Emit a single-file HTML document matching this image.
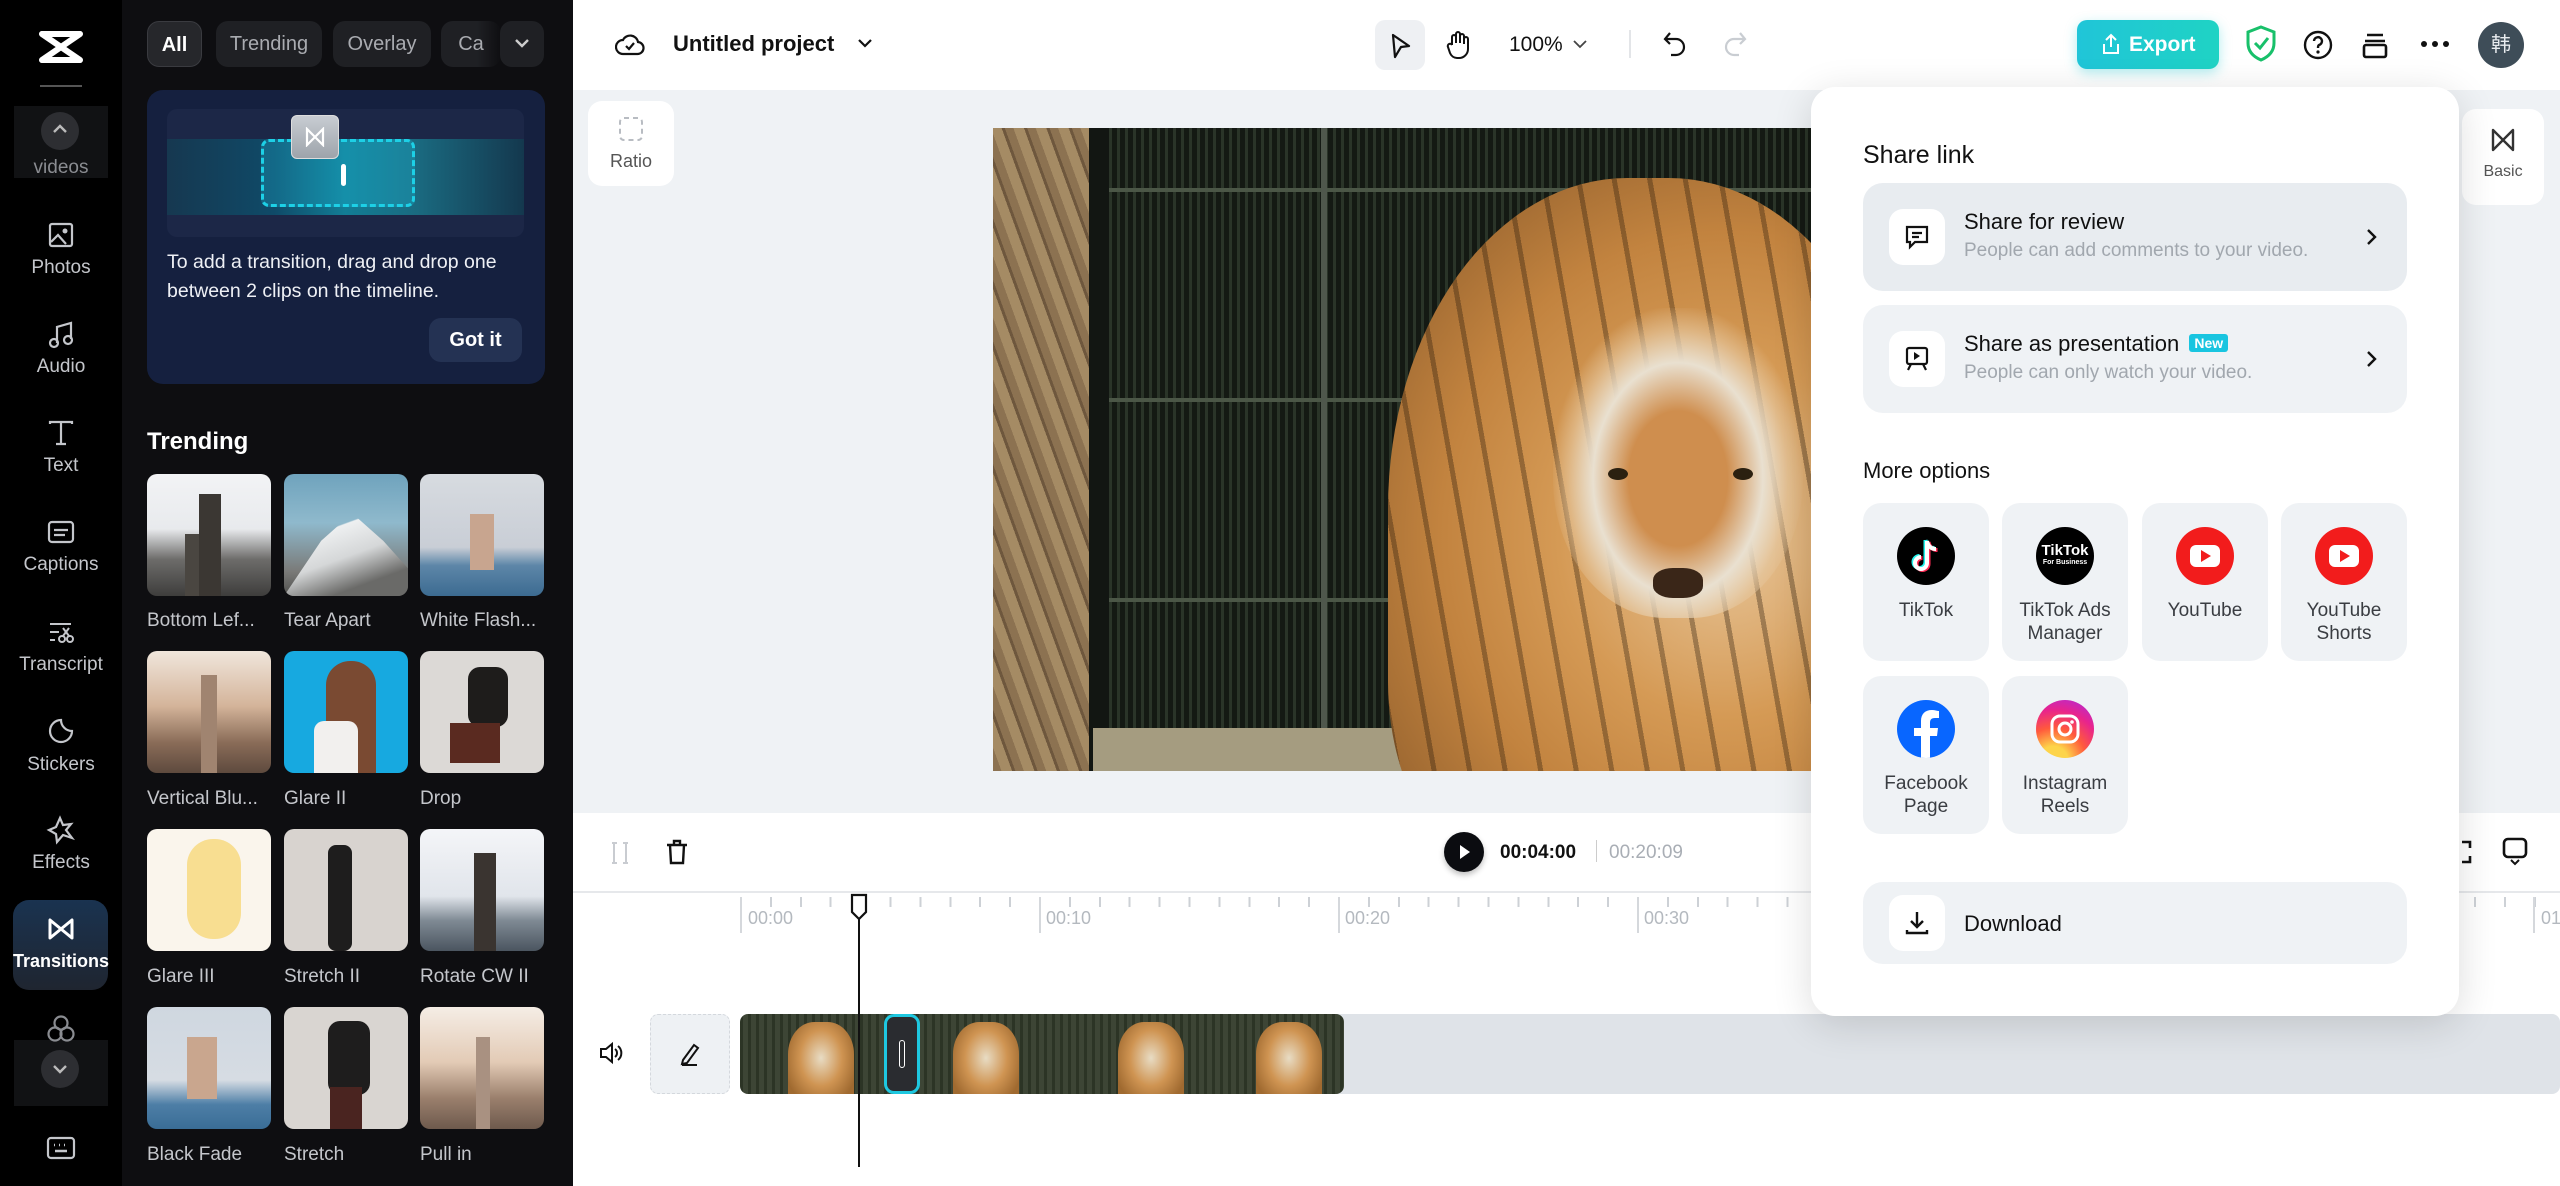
<!DOCTYPE html>
<html><head><meta charset="utf-8">
<style>
*{box-sizing:border-box;margin:0;padding:0}
body{width:2560px;height:1186px;overflow:hidden;position:relative;background:#fff;font-family:"Liberation Sans","Noto Sans CJK SC",sans-serif}
.a{position:absolute}
.nav{left:0;top:0;width:122px;height:1186px;background:#000}
.ni{position:absolute;left:0;width:122px;text-align:center;color:#c4c6cb;font-size:19px}
.ni svg{display:block;margin:0 auto}
.panel{left:122px;top:0;width:451px;height:1186px;background:#0e0e11}
.tab{position:absolute;top:21px;height:46px;border-radius:12px;background:#1f2024;color:#a9abb0;font-size:20px;line-height:46px;text-align:center}
.th{position:absolute;width:124px;height:122px;border-radius:10px;overflow:hidden}
.tl{position:absolute;color:#c4c6cb;font-size:19px;white-space:nowrap}
.pop{left:1811px;top:87px;width:648px;height:929px;background:#fff;border-radius:24px;box-shadow:0 8px 40px rgba(0,0,0,.14)}
.card{position:absolute;left:52px;width:544px;border-radius:20px;background:#eff2f5}
.ib{position:absolute;left:26px;width:56px;height:56px;background:#fff;border-radius:14px}
.ib svg{position:absolute;left:14px;top:14px}
.tile{position:absolute;width:126px;height:158px;border-radius:18px;background:#eff2f5;text-align:center;color:#3a3d42;font-size:19px;line-height:23px}
.tile .c{width:58px;height:58px;border-radius:50%;margin:24px auto 14px;position:relative;overflow:hidden}
.tk{position:absolute;top:562px;color:#b4b9bf;font-size:18px}
</style></head><body>

<!-- NAV -->
<div class="a nav">
  <svg class="a" style="left:38px;top:30px" width="46" height="34" viewBox="0 0 46 34"><path d="M4 4 L42 4 M4 30 L42 30 M4 4 L23 17 L42 4 M4 30 L23 17 L42 30" stroke="#fff" stroke-width="6" fill="none" stroke-linecap="round"/></svg>
  <div class="a" style="left:40px;top:85px;width:42px;height:2px;background:#555"></div>
  <div class="a" style="left:14px;top:106px;width:94px;height:72px;background:#111214"></div>
  <div class="a" style="left:41px;top:112px;width:38px;height:38px;border-radius:50%;background:#2d2e32"></div>
  <svg class="a" style="left:51px;top:122px" width="18" height="14"><path d="M3 10 L9 4 L15 10" stroke="#bbb" stroke-width="2.4" fill="none"/></svg>
  <div class="ni" style="top:157px;color:#8a8c91">videos</div>
  <div class="ni" style="top:222px"><svg width="26" height="26"><rect x="2" y="2" width="22" height="22" rx="2" fill="none" stroke="#c4c6cb" stroke-width="2.2"/><circle cx="17" cy="9" r="2.5" fill="#c4c6cb"/><path d="M3 20 L10 13 L18 22" stroke="#c4c6cb" stroke-width="2.2" fill="none"/></svg><div style="margin-top:9px">Photos</div></div>
  <div class="ni" style="top:321px"><svg width="26" height="28"><path d="M9 22 V6 L23 2 V18" stroke="#c4c6cb" stroke-width="2.2" fill="none"/><circle cx="6" cy="22" r="4" fill="none" stroke="#c4c6cb" stroke-width="2.2"/><circle cx="20" cy="19" r="4" fill="none" stroke="#c4c6cb" stroke-width="2.2"/></svg><div style="margin-top:7px">Audio</div></div>
  <div class="ni" style="top:420px"><svg width="26" height="26"><path d="M2 4 V2 H24 V4 M13 2 V24 M8 24 H18" stroke="#c4c6cb" stroke-width="2.2" fill="none"/></svg><div style="margin-top:9px">Text</div></div>
  <div class="ni" style="top:520px"><svg width="28" height="24"><rect x="2" y="2" width="24" height="20" rx="3" fill="none" stroke="#c4c6cb" stroke-width="2.2"/><path d="M7 10 H21 M7 15 H18" stroke="#c4c6cb" stroke-width="2.2"/></svg><div style="margin-top:10px">Captions</div></div>
  <div class="ni" style="top:620px"><svg width="28" height="24"><path d="M3 4 H24 M3 12 H12 M3 20 H8" stroke="#c4c6cb" stroke-width="2"/><circle cx="15" cy="19" r="3" fill="none" stroke="#c4c6cb" stroke-width="2"/><circle cx="23" cy="19" r="3" fill="none" stroke="#c4c6cb" stroke-width="2"/><path d="M16 16 L22 8 M22 16 L16 8" stroke="#c4c6cb" stroke-width="2"/></svg><div style="margin-top:10px">Transcript</div></div>
  <div class="ni" style="top:717px"><svg width="28" height="28"><path d="M25 14 A11 11 0 1 1 14 3 A11 11 0 0 0 25 14 Z" fill="none" stroke="#c4c6cb" stroke-width="2.2"/></svg><div style="margin-top:9px">Stickers</div></div>
  <div class="ni" style="top:815px"><svg width="30" height="30"><path d="M14 3 L17 10 L25 9 L20 15 L26 23 L17 20 L11 27 L10 19 L3 15 L10 12 Z" fill="none" stroke="#c4c6cb" stroke-width="2.2"/></svg><div style="margin-top:7px">Effects</div></div>
  <div class="a" style="left:13px;top:900px;width:95px;height:90px;border-radius:16px;background:linear-gradient(180deg,#1a3350,#1f2530)"></div>
  <div class="ni" style="top:917px;color:#fff;font-weight:bold;font-size:18px"><svg width="28" height="24"><path d="M3 3 V21 L25 3 V21 Z" fill="none" stroke="#fff" stroke-width="3" stroke-linejoin="round"/></svg><div style="margin-top:10px">Transitions</div></div>
  <div class="a" style="left:14px;top:1040px;width:94px;height:66px;background:#111214"></div>
  <svg class="a" style="left:46px;top:1014px" width="30" height="30"><circle cx="15" cy="9" r="6.5" fill="none" stroke="#8a8c91" stroke-width="2.2"/><circle cx="9" cy="20" r="6.5" fill="none" stroke="#8a8c91" stroke-width="2.2"/><circle cx="21" cy="20" r="6.5" fill="none" stroke="#8a8c91" stroke-width="2.2"/></svg>
  <div class="a" style="left:41px;top:1050px;width:38px;height:38px;border-radius:50%;background:#2d2e32"></div>
  <svg class="a" style="left:51px;top:1062px" width="18" height="14"><path d="M3 4 L9 10 L15 4" stroke="#bbb" stroke-width="2.4" fill="none"/></svg>
  <svg class="a" style="left:46px;top:1136px" width="30" height="24"><rect x="2" y="2" width="26" height="20" rx="3" fill="none" stroke="#c4c6cb" stroke-width="2.2"/><path d="M8 9 h1 M13 9 h1 M18 9 h1 M23 9 h0 M9 15 H21" stroke="#c4c6cb" stroke-width="2.4"/></svg>
</div>

<!-- PANEL -->
<div class="a panel">
  <div class="tab" style="left:25px;width:55px;background:#26272b;border:1.5px solid #3a3b40;color:#fff;font-weight:bold">All</div>
  <div class="tab" style="left:94px;width:106px">Trending</div>
  <div class="tab" style="left:211px;width:98px">Overlay</div>
  <div class="tab" style="left:319px;width:60px;background:linear-gradient(90deg,#1f2024 60%,#0e0e11)">Ca</div>
  <div class="tab" style="left:378px;width:44px"><svg width="20" height="46"><path d="M4 19 L10 25 L16 19" stroke="#ccc" stroke-width="2.4" fill="none"/></svg></div>

  <div class="a" style="left:25px;top:90px;width:398px;height:294px;border-radius:16px;background:#15203f">
    <div class="a" style="left:20px;top:19px;width:357px;height:128px;border-radius:10px;background:#1c2747;overflow:hidden">
      <div class="a" style="left:0;top:30px;width:357px;height:76px;background:linear-gradient(90deg,#163850,#0f4a68 30%,#127d95 50%,#1a6a80 70%,#14384e)"></div>
      <div class="a" style="left:94px;top:30px;width:154px;height:68px;border:3px dashed #1dd0e6;border-radius:8px;background:rgba(30,200,230,.25)"></div>
      <div class="a" style="left:124px;top:6px;width:48px;height:44px;border-radius:6px;background:linear-gradient(#c8ccd2,#9ea4ab);border:1px solid #ddd"></div>
      <svg class="a" style="left:138px;top:18px" width="20" height="20"><path d="M2 2 V18 L18 2 V18 Z" fill="none" stroke="#fff" stroke-width="2.2"/></svg>
      <div class="a" style="left:174px;top:55px;width:5px;height:22px;border-radius:3px;background:#fff"></div>
    </div>
    <div class="a" style="left:20px;top:158px;width:370px;color:#eef0f5;font-size:19.5px;line-height:29px">To add a transition, drag and drop one between 2 clips on the timeline.</div>
    <div class="a" style="left:282px;top:228px;width:93px;height:44px;border-radius:12px;background:#243253;color:#fff;font-weight:bold;font-size:20px;line-height:44px;text-align:center">Got it</div>
  </div>
  <div class="a" style="left:25px;top:428px;color:#fff;font-weight:bold;font-size:24px">Trending</div>

  <div class="th" style="left:25px;top:474px;background:linear-gradient(180deg,#f2f3f5 0%,#e8eaed 45%,#6d6c6a 70%,#3e3d3c)"><div class="a" style="left:52px;top:20px;width:22px;height:102px;background:#3b3733"></div><div class="a" style="left:38px;top:60px;width:14px;height:62px;background:#4a4641"></div></div>
  <div class="th" style="left:162px;top:474px;background:linear-gradient(180deg,#6fa3bd,#8fb9cc 40%,#7a7a78 80%,#50504e)"><div class="a" style="left:0;top:30px;width:124px;height:92px;background:linear-gradient(160deg,transparent 30%,#eef0f1 31%,#d5d7d8 55%,#6a6a68 80%);clip-path:polygon(0 100%,30% 40%,55% 10%,80% 40%,100% 70%,100% 100%)"></div></div>
  <div class="th" style="left:298px;top:474px;background:linear-gradient(180deg,#d7dbe0 0%,#c9ced6 60%,#5d86a8 75%,#3c6b91)"><div class="a" style="left:50px;top:40px;width:24px;height:56px;background:#c8a58f"></div></div>
  <div class="tl" style="left:25px;top:610px">Bottom Lef...</div>
  <div class="tl" style="left:162px;top:610px">Tear Apart</div>
  <div class="tl" style="left:298px;top:610px">White Flash...</div>

  <div class="th" style="left:25px;top:651px;background:linear-gradient(180deg,#f0e6dc,#d4b49a 45%,#8a6c58 75%,#5e4a3e)"><div class="a" style="left:54px;top:24px;width:16px;height:98px;background:#a08470"></div></div>
  <div class="th" style="left:162px;top:651px;background:#17a9e0"><div class="a" style="left:42px;top:10px;width:50px;height:112px;border-radius:24px 24px 0 0;background:#7a4a32"></div><div class="a" style="left:30px;top:70px;width:44px;height:52px;background:#f2f0ee;border-radius:10px 10px 0 0"></div></div>
  <div class="th" style="left:298px;top:651px;background:#dcd9d6"><div class="a" style="left:48px;top:16px;width:40px;height:60px;background:#1e1c1b;border-radius:12px"></div><div class="a" style="left:30px;top:72px;width:50px;height:40px;background:#5a2a20"></div></div>
  <div class="tl" style="left:25px;top:788px">Vertical Blu...</div>
  <div class="tl" style="left:162px;top:788px">Glare II</div>
  <div class="tl" style="left:298px;top:788px">Drop</div>

  <div class="th" style="left:25px;top:829px;background:#faf5ec"><div class="a" style="left:40px;top:10px;width:54px;height:100px;border-radius:26px;background:#f7d87a;opacity:.8"></div></div>
  <div class="th" style="left:162px;top:829px;background:#d8d3cf"><div class="a" style="left:44px;top:16px;width:24px;height:106px;background:#1e1d1d;border-radius:8px"></div></div>
  <div class="th" style="left:298px;top:829px;background:linear-gradient(180deg,#f4f5f8,#e1e5eb 55%,#7f8a94 75%,#4b5560)"><div class="a" style="left:54px;top:24px;width:22px;height:98px;background:#3a3430"></div></div>
  <div class="tl" style="left:25px;top:966px">Glare III</div>
  <div class="tl" style="left:162px;top:966px">Stretch II</div>
  <div class="tl" style="left:298px;top:966px">Rotate CW II</div>

  <div class="th" style="left:25px;top:1007px;background:linear-gradient(180deg,#cfd7e0,#d6dce3 60%,#4d7ea6 80%,#3a6d96)"><div class="a" style="left:40px;top:30px;width:30px;height:62px;background:#c9a68e"></div></div>
  <div class="th" style="left:162px;top:1007px;background:#d9d5d1"><div class="a" style="left:44px;top:14px;width:42px;height:74px;background:#1e1d1d;border-radius:12px"></div><div class="a" style="left:46px;top:80px;width:32px;height:42px;background:#4a2420"></div></div>
  <div class="th" style="left:298px;top:1007px;background:linear-gradient(180deg,#f5ede5,#e3cbb6 45%,#9a7f6c 75%,#6e5a4d)"><div class="a" style="left:56px;top:30px;width:14px;height:92px;background:#a99181"></div></div>
  <div class="tl" style="left:25px;top:1144px">Black Fade</div>
  <div class="tl" style="left:162px;top:1144px">Stretch</div>
  <div class="tl" style="left:298px;top:1144px">Pull in</div>
</div>
<div class="a" style="left:573px;top:570px;width:12px;height:88px;border-radius:0 10px 10px 0;background:#2f3033"></div>
<svg class="a" style="left:574px;top:602px" width="10" height="22"><path d="M7 3 L3 11 L7 19" stroke="#8a8f96" stroke-width="2" fill="none"/></svg>

<!-- TOP BAR -->
<div class="a" style="left:573px;top:0;width:1987px;height:90px;background:#fff"></div>
<svg class="a" style="left:615px;top:30px" width="30" height="28"><path d="M8 24 H22 A6 6 0 0 0 23 12 A8 8 0 0 0 8 10 A7 7 0 0 0 8 24 Z" fill="none" stroke="#111" stroke-width="2.2"/><path d="M11 16 L14 19 L19 13" stroke="#111" stroke-width="2.2" fill="none"/></svg>
<div class="a" style="left:673px;top:31px;font-size:22px;font-weight:bold;color:#111">Untitled project</div>
<svg class="a" style="left:857px;top:37px" width="16" height="14"><path d="M2 3 L8 9 L14 3" stroke="#111" stroke-width="2.2" fill="none"/></svg>
<div class="a" style="left:1375px;top:20px;width:50px;height:50px;border-radius:10px;background:#eef0f3"></div>
<svg class="a" style="left:1389px;top:32px" width="24" height="28"><path d="M4 3 L20 14 L12 15 L6 25 Z" fill="none" stroke="#111" stroke-width="2.2" stroke-linejoin="round"/></svg>
<svg class="a" style="left:1444px;top:29px" width="28" height="32"><path d="M8 16 V8 a2 2 0 0 1 4 0 V14 V5 a2 2 0 0 1 4 0 V14 V7 a2 2 0 0 1 4 0 V15 V10 a2 2 0 0 1 4 0 V20 a9 9 0 0 1 -9 9 h-2 a8 8 0 0 1 -7 -5 L4 18 a2 2 0 0 1 4 -2" fill="none" stroke="#111" stroke-width="2"/></svg>
<div class="a" style="left:1509px;top:33px;font-size:21px;color:#111">100%</div>
<svg class="a" style="left:1572px;top:38px" width="16" height="12"><path d="M2 3 L8 9 L14 3" stroke="#444" stroke-width="1.8" fill="none"/></svg>
<div class="a" style="left:1629px;top:30px;width:2px;height:28px;background:#e3e5e8"></div>
<svg class="a" style="left:1662px;top:30px" width="26" height="28"><path d="M8 3 L3 9 L8 14 M3 9 H14 a8 8 0 0 1 0 16 H9" fill="none" stroke="#111" stroke-width="2.2"/></svg>
<svg class="a" style="left:1722px;top:30px" width="26" height="28"><path d="M18 3 L23 9 L18 14 M23 9 H12 a8 8 0 0 0 0 16 H17" fill="none" stroke="#c9cdd2" stroke-width="2.2"/></svg>
<div class="a" style="left:2077px;top:20px;width:142px;height:49px;border-radius:10px;background:linear-gradient(90deg,#20c5d8,#1fd3c4);box-shadow:0 4px 12px rgba(30,200,210,.35)"></div>
<svg class="a" style="left:2100px;top:32px" width="22" height="24"><path d="M11 3 V15 M6 8 L11 3 L16 8 M4 12 V21 H18 V12" fill="none" stroke="#fff" stroke-width="2"/></svg>
<div class="a" style="left:2129px;top:33px;color:#fff;font-weight:bold;font-size:21px">Export</div>
<svg class="a" style="left:2244px;top:24px" width="34" height="40"><path d="M17 3 L30 8 V19 C30 28 24 33 17 36 C10 33 4 28 4 19 V8 Z" fill="none" stroke="#18c06a" stroke-width="3"/><path d="M11 19 L16 24 L24 14" fill="none" stroke="#18c06a" stroke-width="3"/></svg>
<svg class="a" style="left:2302px;top:29px" width="32" height="32"><circle cx="16" cy="16" r="13" fill="none" stroke="#111" stroke-width="2.4"/><path d="M12 12 a4 4 0 1 1 5 4 c-1 .5 -1 1.5 -1 3" fill="none" stroke="#111" stroke-width="2.4"/><circle cx="16" cy="23" r="1.6" fill="#111"/></svg>
<svg class="a" style="left:2360px;top:31px" width="30" height="30"><path d="M7 4 H23 M5 10 H25" stroke="#111" stroke-width="2.6"/><rect x="4" y="14" width="22" height="12" rx="2" fill="none" stroke="#111" stroke-width="2.6"/></svg>
<svg class="a" style="left:2420px;top:39px" width="30" height="10"><circle cx="4" cy="5" r="3" fill="#111"/><circle cx="15" cy="5" r="3" fill="#111"/><circle cx="26" cy="5" r="3" fill="#111"/></svg>
<div class="a" style="left:2478px;top:22px;width:46px;height:46px;border-radius:50%;background:#3e4d58;color:#e8ecef;font-size:20px;line-height:46px;text-align:center">韩</div>

<!-- CANVAS -->
<div class="a" style="left:573px;top:90px;width:1987px;height:723px;background:#eff2f5"></div>
<div class="a" style="left:588px;top:101px;width:86px;height:85px;border-radius:14px;background:#fff;text-align:center;color:#555;font-size:18px">
  <svg style="display:block;margin:14px auto 8px" width="28" height="28"><rect x="3" y="3" width="22" height="22" rx="4" fill="none" stroke="#b8bcc2" stroke-width="2" stroke-dasharray="5 4"/></svg>Ratio</div>
<div class="a" style="left:993px;top:128px;width:820px;height:643px;overflow:hidden;background:#1d231c">
  <div class="a" style="left:0;top:0;width:96px;height:643px;background:repeating-linear-gradient(70deg,#8c7251 0 8px,#a58b64 8px 18px,#6e573d 18px 21px)"></div>
  <div class="a" style="left:96px;top:0;width:20px;height:643px;background:#121612"></div>
  <div class="a" style="left:116px;top:0;width:720px;height:643px;background:repeating-linear-gradient(90deg,#2a3428 0 3px,#141913 3px 8px)"></div>
  <div class="a" style="left:116px;top:60px;width:720px;height:4px;background:#4b5646"></div>
  <div class="a" style="left:116px;top:270px;width:720px;height:4px;background:#4b5646"></div>
  <div class="a" style="left:116px;top:470px;width:720px;height:4px;background:#4b5646"></div>
  <div class="a" style="left:328px;top:0;width:6px;height:643px;background:#4f574c"></div>
  <div class="a" style="left:100px;top:600px;width:400px;height:43px;background:#a59c80"></div>
  <div class="a" style="left:395px;top:50px;width:520px;height:720px;border-radius:46% 46% 30% 30%;background:radial-gradient(ellipse at 65% 50%,#e8c79c 0%,#d59a55 35%,#c2833f 60%,#8a5a2a 95%)"></div>
  <div class="a" style="left:395px;top:50px;width:520px;height:720px;border-radius:46% 46% 30% 30%;background:repeating-linear-gradient(80deg,transparent 0 30px,rgba(40,25,10,.35) 30px 35px)"></div>
  <div class="a" style="left:560px;top:180px;width:250px;height:310px;border-radius:45%;background:radial-gradient(ellipse at 50% 55%,#cf8e4e 0 28%,#e9e0d0 48%,rgba(230,200,160,.6) 62%,transparent 72%)"></div>
  <div class="a" style="left:660px;top:440px;width:50px;height:30px;border-radius:40%;background:#3a2618"></div>
  <div class="a" style="left:615px;top:340px;width:20px;height:12px;border-radius:50%;background:#2b2010"></div>
  <div class="a" style="left:740px;top:340px;width:20px;height:12px;border-radius:50%;background:#2b2010"></div>
</div>
<div class="a" style="left:2462px;top:109px;width:82px;height:96px;border-radius:14px;background:#fff;text-align:center;color:#555;font-size:16px">
  <svg style="display:block;margin:18px auto 10px" width="26" height="26"><path d="M3 3 V23 L23 3 V23 Z" fill="none" stroke="#333" stroke-width="2.4" stroke-linejoin="round"/></svg>Basic</div>

<!-- TIMELINE -->
<div class="a" style="left:573px;top:813px;width:1987px;height:80px;background:#fff;border-bottom:2px solid #e6e8eb"></div>
<svg class="a" style="left:608px;top:840px" width="24" height="26"><path d="M4 3 H9 M4 23 H9 M6 3 V23 M15 3 H20 M15 23 H20 M18 3 V23" stroke="#c9ccd1" stroke-width="2"/></svg>
<svg class="a" style="left:664px;top:838px" width="26" height="28"><path d="M3 7 H23 M10 7 V3 H16 V7 M6 7 L7 25 H19 L20 7" fill="none" stroke="#111" stroke-width="2.4"/></svg>
<div class="a" style="left:1444px;top:832px;width:40px;height:40px;border-radius:50%;background:#0b0c10;box-shadow:0 3px 6px rgba(0,0,0,.25)"></div>
<svg class="a" style="left:1458px;top:843px" width="14" height="18"><path d="M2 2 L12 9 L2 16 Z" fill="#fff"/></svg>
<div class="a" style="left:1500px;top:842px;font-size:19px;font-weight:bold;color:#111">00:04:00</div>
<div class="a" style="left:1596px;top:840px;width:1px;height:22px;background:#ccc"></div>
<div class="a" style="left:1609px;top:842px;font-size:19px;color:#a9aeb5">00:20:09</div>
<svg class="a" style="left:2448px;top:838px" width="28" height="28"><path d="M14 4 H22 V10 M22 18 V24 H14" fill="none" stroke="#111" stroke-width="2.6"/></svg>
<svg class="a" style="left:2500px;top:836px" width="30" height="32"><rect x="4" y="3" width="22" height="18" rx="4" fill="none" stroke="#111" stroke-width="2.6"/><path d="M11 24 L15 28 L19 24" fill="none" stroke="#111" stroke-width="2"/></svg>

<!-- ruler -->
<div class="a" style="left:740px;top:897px;width:1820px;height:30px;background:
 repeating-linear-gradient(90deg,#cdd1d6 0 2px,transparent 2px 29.9px);clip-path:inset(0 0 20px 0)"></div>
<div class="a" style="left:740px;top:897px;width:2px;height:36px;background:#d5d8dc"></div>
<div class="a" style="left:1039px;top:897px;width:2px;height:36px;background:#d5d8dc"></div>
<div class="a" style="left:1338px;top:897px;width:2px;height:36px;background:#d5d8dc"></div>
<div class="a" style="left:1637px;top:897px;width:2px;height:36px;background:#d5d8dc"></div>
<div class="a" style="left:2533px;top:897px;width:2px;height:36px;background:#d5d8dc"></div>
<div class="tk" style="left:748px;top:908px">00:00</div>
<div class="tk" style="left:1046px;top:908px">00:10</div>
<div class="tk" style="left:1345px;top:908px">00:20</div>
<div class="tk" style="left:1644px;top:908px">00:30</div>
<div class="tk" style="left:2541px;top:908px">01</div>

<!-- track -->
<svg class="a" style="left:598px;top:1040px" width="26" height="26"><path d="M3 9 H8 L14 4 V22 L8 17 H3 Z" fill="none" stroke="#111" stroke-width="2"/><path d="M17 9 a5 5 0 0 1 0 8 M20 6 a9 9 0 0 1 0 14" fill="none" stroke="#111" stroke-width="2"/></svg>
<div class="a" style="left:650px;top:1014px;width:80px;height:80px;border-radius:8px;background:#eef1f4;border:1px dashed #d4d8dd"></div>
<svg class="a" style="left:677px;top:1040px" width="26" height="28"><path d="M6 20 L17 5 L21 8 L10 23 L5 24 Z M5 25 H20" fill="none" stroke="#111" stroke-width="2"/></svg>
<div class="a" style="left:1330px;top:1014px;width:1230px;height:80px;border-radius:0 8px 8px 0;background:#dfe3e8"></div>
<div class="a" style="left:740px;top:1014px;width:604px;height:80px;border-radius:8px;overflow:hidden;background:repeating-linear-gradient(90deg,#2c3425 0 3px,#3d4535 3px 8px)">
  <div class="a" style="left:48px;top:8px;width:66px;height:80px;border-radius:40% 40% 10% 10%;background:radial-gradient(ellipse at 50% 45%,#e8dcc4,#cf9452 45%,#a06a30 80%)"></div>
  <div class="a" style="left:213px;top:8px;width:66px;height:80px;border-radius:40% 40% 10% 10%;background:radial-gradient(ellipse at 50% 45%,#e8dcc4,#cf9452 45%,#a06a30 80%)"></div>
  <div class="a" style="left:378px;top:8px;width:66px;height:80px;border-radius:40% 40% 10% 10%;background:radial-gradient(ellipse at 50% 45%,#e8dcc4,#cf9452 45%,#a06a30 80%)"></div>
  <div class="a" style="left:516px;top:8px;width:66px;height:80px;border-radius:40% 40% 10% 10%;background:radial-gradient(ellipse at 50% 45%,#e8dcc4,#cf9452 45%,#a06a30 80%)"></div>
</div>
<div class="a" style="left:884px;top:1014px;width:36px;height:80px;border:3px solid #1ec8e0;border-radius:10px;background:#2a2c30"></div>
<div class="a" style="left:899px;top:1040px;width:6px;height:28px;border:1.5px solid #fff;border-radius:3px"></div>
<div class="a" style="left:858px;top:905px;width:2px;height:262px;background:#111"></div>
<svg class="a" style="left:849px;top:892px" width="20" height="30"><path d="M3 3 H17 V20 L10 27 L3 20 Z" fill="#fff" stroke="#111" stroke-width="2.2"/></svg>

<!-- POPUP -->
<div class="a pop">
  <div class="a" style="left:52px;top:54px;font-size:25px;color:#111">Share link</div>
  <div class="card" style="top:96px;height:108px;background:#e8ecf0">
    <div class="ib" style="top:26px"><svg width="28" height="28"><path d="M4 4 H24 V19 H12 L7 24 V19 H4 Z M9 10 H19 M9 14 H16" fill="none" stroke="#111" stroke-width="2.2"/></svg></div>
    <div class="a" style="left:101px;top:26px;font-size:22px;color:#111">Share for review</div>
    <div class="a" style="left:101px;top:57px;font-size:19px;color:#a1a7ae">People can add comments to your video.</div>
    <svg class="a" style="left:502px;top:44px" width="14" height="20"><path d="M3 3 L10 10 L3 17" fill="none" stroke="#111" stroke-width="2.4"/></svg>
  </div>
  <div class="card" style="top:218px;height:108px">
    <div class="ib" style="top:26px"><svg width="28" height="28"><rect x="4" y="3" width="20" height="16" rx="2" fill="none" stroke="#111" stroke-width="2.2"/><path d="M11 7 L17 11 L11 15 Z" fill="#111"/><path d="M8 19 L5 25 M20 19 L23 25" stroke="#111" stroke-width="2.2"/></svg></div>
    <div class="a" style="left:101px;top:26px;font-size:22px;color:#111">Share as presentation <span style="display:inline-block;background:#19c5e0;color:#fff;font-weight:bold;font-size:14px;padding:1px 5px;border-radius:3px;vertical-align:3px;margin-left:4px">New</span></div>
    <div class="a" style="left:101px;top:57px;font-size:19px;color:#a1a7ae">People can only watch your video.</div>
    <svg class="a" style="left:502px;top:44px" width="14" height="20"><path d="M3 3 L10 10 L3 17" fill="none" stroke="#111" stroke-width="2.4"/></svg>
  </div>
  <div class="a" style="left:52px;top:371px;font-size:22px;color:#111">More options</div>

  <div class="tile" style="left:52px;top:416px"><div class="c" style="background:#000"><svg width="58" height="58"><path d="M30 14 V36 a6 6 0 1 1 -6 -6 M30 14 c1 5 4 8 9 8" fill="none" stroke="#25f4ee" stroke-width="4" transform="translate(-1.5,-1)"/><path d="M30 14 V36 a6 6 0 1 1 -6 -6 M30 14 c1 5 4 8 9 8" fill="none" stroke="#fe2c55" stroke-width="4" transform="translate(1.5,1)"/><path d="M30 14 V36 a6 6 0 1 1 -6 -6 M30 14 c1 5 4 8 9 8" fill="none" stroke="#fff" stroke-width="4"/></svg></div>TikTok</div>
  <div class="tile" style="left:191px;top:416px"><div class="c" style="background:#000;color:#fff;font-weight:bold;font-size:15px;line-height:14px;padding-top:17px">TikTok<div style="font-size:7px;line-height:10px">For Business</div></div>TikTok Ads<br>Manager</div>
  <div class="tile" style="left:331px;top:416px"><div class="c" style="background:#f21c1c"><div class="a" style="left:14px;top:18px;width:30px;height:22px;border-radius:6px;background:#fff"></div><svg class="a" style="left:24px;top:22px" width="12" height="14"><path d="M1 1 L11 7 L1 13 Z" fill="#f21c1c"/></svg></div>YouTube</div>
  <div class="tile" style="left:470px;top:416px"><div class="c" style="background:#f21c1c"><div class="a" style="left:14px;top:18px;width:30px;height:22px;border-radius:6px;background:#fff"></div><svg class="a" style="left:24px;top:22px" width="12" height="14"><path d="M1 1 L11 7 L1 13 Z" fill="#f21c1c"/></svg></div>YouTube<br>Shorts</div>

  <div class="tile" style="left:52px;top:589px"><div class="c" style="background:#0866ff"><svg width="58" height="58"><path d="M33 58 V36 H40 L41 28 H33 V23 c0-3 1-5 5-5 h4 V11 c-2 0-4-1-7-1 c-7 0-11 4-11 11 V28 H17 V36 H24 V58 Z" fill="#fff"/></svg></div>Facebook<br>Page</div>
  <div class="tile" style="left:191px;top:589px"><div class="c" style="background:radial-gradient(circle at 30% 105%,#fdd44a 0 20%,#ff5a3c 45%,#e8238d 70%,#b22bd6 95%)"><svg width="58" height="58"><rect x="16" y="16" width="26" height="26" rx="8" fill="none" stroke="#fff" stroke-width="3"/><circle cx="29" cy="29" r="6" fill="none" stroke="#fff" stroke-width="3"/><circle cx="36" cy="22" r="1.8" fill="#fff"/></svg></div>Instagram<br>Reels</div>

  <div class="card" style="top:795px;height:82px">
    <div class="ib" style="top:13px"><svg width="28" height="28"><path d="M14 3 V18 M8 12 L14 18 L20 12 M4 21 V24 H24 V21" fill="none" stroke="#111" stroke-width="2.4"/></svg></div>
    <div class="a" style="left:101px;top:29px;font-size:22px;color:#111">Download</div>
  </div>
</div>
</body></html>
